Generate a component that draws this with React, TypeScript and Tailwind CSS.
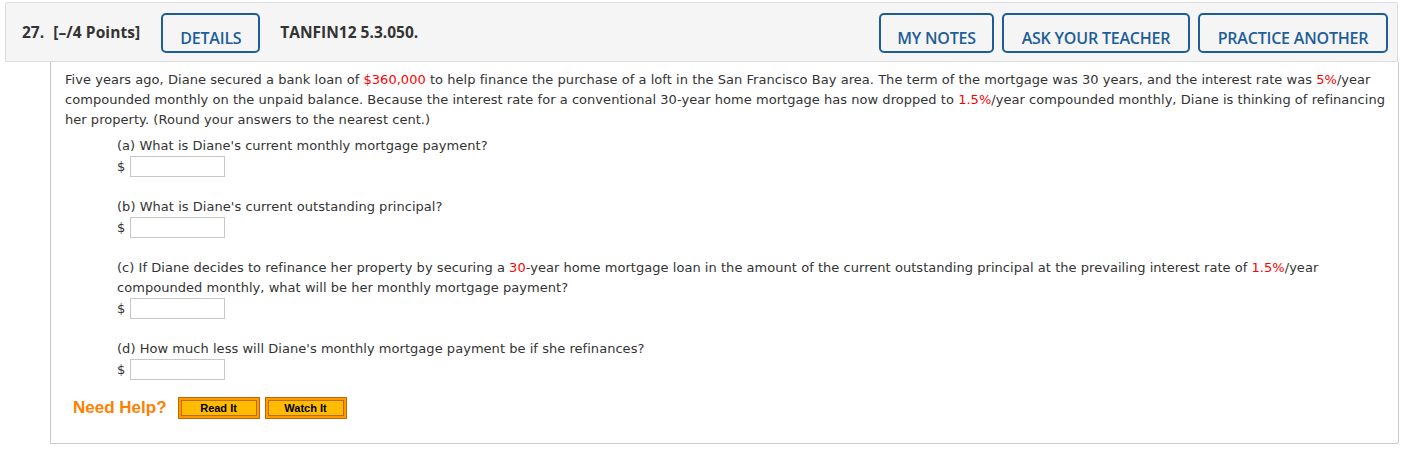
import React from 'react';

const Red: React.FC<{ children: React.ReactNode }> = ({ children }) => (
  <span className="text-[#ff0000]">{children}</span>
);

const AnswerBox: React.FC = () => (
  <div className="flex items-center h-[21px]">
    <span className="w-[13px]">$</span>
    <div className="w-[95px] h-[21px] border border-[#c8c8c8] bg-white" />
  </div>
);

const HeaderButton: React.FC<{ label: string; width: string }> = ({ label, width }) => (
  <div
    className={`${width} h-[40px] border-2 border-[#1e5e98] rounded-[5px] flex items-end justify-center pb-[5px] text-[16px] leading-none font-semibold text-[#1e5e98] tracking-[-0.2px]`}
  >
    {label}
  </div>
);

const App: React.FC = () => {
  const questions = [
    { key: 'a', text: <>(a) What is Diane's current monthly mortgage payment?</> },
    { key: 'b', text: <>(b) What is Diane's current outstanding principal?</> },
    {
      key: 'c',
      text: (
        <>
          (c) If Diane decides to refinance her property by securing a <Red>30</Red>-year home mortgage loan in the
          amount of the current outstanding principal at the prevailing interest rate of <Red>1.5%</Red>/year
          compounded monthly, what will be her monthly mortgage payment?
        </>
      )
    },
    { key: 'd', text: <>(d) How much less will Diane's monthly mortgage payment be if she refinances?</> }
  ];

  return (
    <div className="w-[1404px] h-[454px] bg-white pt-[2px] font-['Open_Sans']">
      <div className="ml-[5px] w-[1393px] h-[60px] bg-[#f5f5f5] border border-[#dcdcdc] rounded-t-[2px] flex items-center pl-[16px] pr-[9px] text-[#333333]">
        <span className="mt-[1px] text-[15.5px] font-bold">27.</span>
        <span className="mt-[1px] ml-[9px] text-[15.5px] font-bold tracking-[0.1px]">[&ndash;/4 Points]</span>
        <div className="ml-[21px] mt-[2px]">
          <HeaderButton label="DETAILS" width="w-[99px]" />
        </div>
        <span className="mt-[1px] ml-[20px] text-[15.5px] font-bold">TANFIN12 5.3.050.</span>
        <div className="ml-auto mt-[2px] flex gap-[8px]">
          <HeaderButton label="MY NOTES" width="w-[115px]" />
          <HeaderButton label="ASK YOUR TEACHER" width="w-[188px]" />
          <HeaderButton label="PRACTICE ANOTHER" width="w-[190px]" />
        </div>
      </div>

      <div className="ml-[50px] w-[1349px] h-[382px] border-x border-b border-[#cccccc] rounded-br-[3px] pl-[14px] pr-[3px] pt-[8px] font-['DejaVu_Sans'] text-[13px] tracking-[0.04px] leading-[20px] text-[#333333]">
        <p>
          Five years ago, Diane secured a bank loan of <Red>$360,000</Red> to help finance the purchase of a loft in the
          San Francisco Bay area. The term of the mortgage was 30 years, and the interest rate was <Red>5%</Red>/year
          compounded monthly on the unpaid balance. Because the interest rate for a conventional 30-year home mortgage
          has now dropped to <Red>1.5%</Red>/year compounded monthly, Diane is thinking of refinancing her property.
          (Round your answers to the nearest cent.)
        </p>

        <div className="ml-[52px] mt-[6px] flex flex-col gap-[20px]">
          {questions.map((q) => (
            <div key={q.key} className="pr-[57px]">
              <p>{q.text}</p>
              <AnswerBox />
            </div>
          ))}
        </div>

        <div className="ml-[8px] mt-[17px] flex items-center font-['Liberation_Sans'] tracking-normal">
          <span className="text-[17px] font-bold text-[#ff8000]">Need Help?</span>
          <div className="ml-[11px] flex gap-[5px]">
            {['Read It', 'Watch It'].map((label) => (
              <div
                key={label}
                className="w-[82px] h-[22px] border border-[#c26a00] bg-[#ff9900] p-[2px]"
              >
                <div className="h-full border border-[#b86e10] bg-[#ffbb00] flex items-center justify-center text-[11px] font-bold text-black">
                  {label}
                </div>
              </div>
            ))}
          </div>
        </div>
      </div>
    </div>
  );
};

export default App;
